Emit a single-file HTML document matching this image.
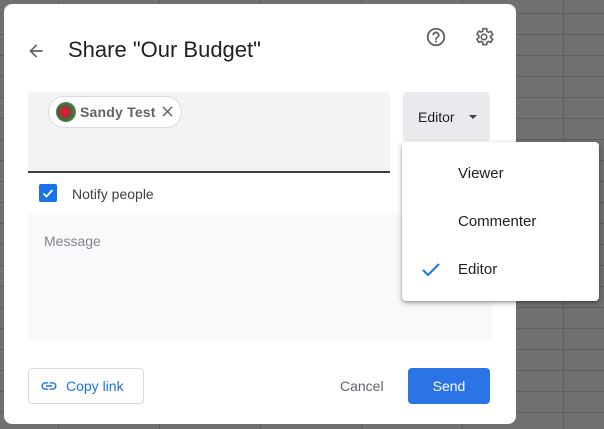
<!DOCTYPE html>
<html><head><style>
body{margin:0;width:604px;height:429px;overflow:hidden;font-family:"Liberation Sans",Roboto,sans-serif;position:relative;
background-color:#707070;
background-image:linear-gradient(to right,#5f5f5f 1px,transparent 1px),linear-gradient(to bottom,#5f5f5f 1px,transparent 1px);
background-size:101px 21px;background-position:58px 13px;}
.a{position:absolute}
.dlg{left:4px;top:4px;width:512px;height:420px;background:#fff;border-radius:8px}
</style></head><body>
<div class="a dlg"></div>
<svg class="a" style="left:26px;top:41px" width="20" height="20" viewBox="0 0 24 24"><path d="M20 11H7.83l5.59-5.59L12 4l-8 8 8 8 1.41-1.41L7.83 13H20v-2z" fill="#5f6368"/></svg>
<div class="a" style="left:68px;top:37px;font-size:22px;color:#202124">Share "Our Budget"</div>
<svg class="a" style="left:425px;top:26px" width="22" height="22" viewBox="0 0 24 24"><path fill="#5f6368" d="M11 18h2v-2h-2v2zm1-16C6.480 2 2 6.48 2 12s4.48 10 10 10 10-4.480 10-10S17.52 2 12 2zm0 18c-4.41 0-8-3.59-8-8s3.59-8 8-8 8 3.59 8 8-3.59 8-8 8zm0-14c-2.21 0-4 1.79-4 4h2c0-1.1.9-2 2-2s2 .9 2 2c0 2-3 1.75-3 5h2c0-2.25 3-2.5 3-5 0-2.21-1.79-4-4-4z"/></svg>
<svg class="a" style="left:473px;top:26px" width="22" height="22" viewBox="0 0 24 24"><path fill="none" stroke="#5f6368" stroke-width="1.8" d="M19.43 12.98c.04-.32.07-.64.07-.98s-.03-.66-.07-.98l2.11-1.650-2-3.460-2.49 1c-.52-.4-1.080-.73-1.690-.98L14.9 3h-4l-.38 2.65c-.61.25-1.17.59-1.69.98l-2.49-1-2 3.46 2.11 1.65c-.04.32-.07.65-.07.98s.03.66.07.98l-2.11 1.65 2 3.46 2.49-1c.52.4 1.08.73 1.69.98l.38 2.65h4l.38-2.650c.61-.25 1.17-.59 1.69-.98l2.49 1 2-3.46-2.11-1.65z"/><circle cx="12" cy="12" r="3" fill="none" stroke="#5f6368" stroke-width="1.8"/></svg>
<div class="a" style="left:28px;top:92px;width:362px;height:79px;background:#f1f3f4;border-radius:4px 4px 0 0;border-bottom:2px solid #3c4043"></div>
<div class="a" style="left:48px;top:96px;width:132px;height:30px;background:#fff;border:1px solid #dadce0;border-radius:16px"></div>
<div class="a" style="left:56px;top:102px;width:20px;height:20px;border-radius:50%;background:radial-gradient(circle at 45% 50%,#d0203a 0 30%,#3d6a3a 45%,#7a9a6a)"></div>
<div class="a" style="left:80px;top:104px;font-size:14px;font-weight:bold;color:#5f6368;letter-spacing:0.2px">Sandy Test</div>
<svg class="a" style="left:162px;top:106px" width="11" height="11" viewBox="0 0 12 12"><path d="M1 1L11 11M11 1L1 11" stroke="#5f6368" stroke-width="1.5"/></svg>
<div class="a" style="left:403px;top:92px;width:87px;height:49px;background:#e8eaed;border-radius:4px"></div>
<div class="a" style="left:418px;top:109px;font-size:14px;color:#202124">Editor</div>
<div class="a" style="left:469px;top:115px;border:4px solid transparent;border-top:4px solid #3c4043;border-bottom:0"></div>
<div class="a" style="left:39px;top:184px;width:18px;height:18px;background:#1a73e8;border-radius:2px"></div>
<svg class="a" style="left:39px;top:184px" width="18" height="18" viewBox="0 0 18 18"><path d="M4.5 9.5l3 3 6-6.5" stroke="#fff" stroke-width="1.8" fill="none"/></svg>
<div class="a" style="left:72px;top:186px;font-size:14px;color:#3c4043">Notify people</div>
<div class="a" style="left:28px;top:213px;width:464px;height:127px;background:#f8f9fa;border-radius:4px"></div>
<div class="a" style="left:44px;top:233px;font-size:14px;color:#80868b">Message</div>
<div class="a" style="left:28px;top:368px;width:114px;height:34px;border:1px solid #dadce0;border-radius:4px"></div>
<svg class="a" style="left:40px;top:377px" width="18" height="18" viewBox="0 0 24 24"><path fill="#1a73e8" d="M3.9 12c0-1.71 1.39-3.1 3.1-3.1h4V7H7c-2.76 0-5 2.24-5 5s2.24 5 5 5h4v-1.9H7c-1.71 0-3.1-1.39-3.1-3.1zM8 13h8v-2H8v2zm9-6h-4v1.9h4c1.71 0 3.1 1.39 3.1 3.1s-1.39 3.1-3.1 3.1h-4V17h4c2.76 0 5-2.24 5-5s-2.24-5-5-5z"/></svg>
<div class="a" style="left:66px;top:378px;font-size:14px;color:#1a73e8">Copy link</div>
<div class="a" style="left:340px;top:378px;font-size:14px;color:#5f6368">Cancel</div>
<div class="a" style="left:408px;top:368px;width:82px;height:36px;background:#2b74e6;border-radius:4px;color:#fff;font-size:14px;text-align:center;line-height:36px">Send</div>
<div class="a" style="left:402px;top:142px;width:197px;height:159px;background:#fff;border-radius:4px;box-shadow:0 2px 6px rgba(0,0,0,.3),0 1px 2px rgba(0,0,0,.2)"></div>
<div class="a" style="left:458px;top:165px;font-size:15px;color:#202124">Viewer</div>
<div class="a" style="left:458px;top:213px;font-size:15px;color:#202124">Commenter</div>
<div class="a" style="left:458px;top:261px;font-size:15px;color:#202124">Editor</div>
<svg class="a" style="left:421px;top:262px" width="20" height="16" viewBox="0 0 20 16"><path d="M2 8l5 5L18 2" stroke="#1a73e8" stroke-width="2" fill="none"/></svg>
</body></html>
